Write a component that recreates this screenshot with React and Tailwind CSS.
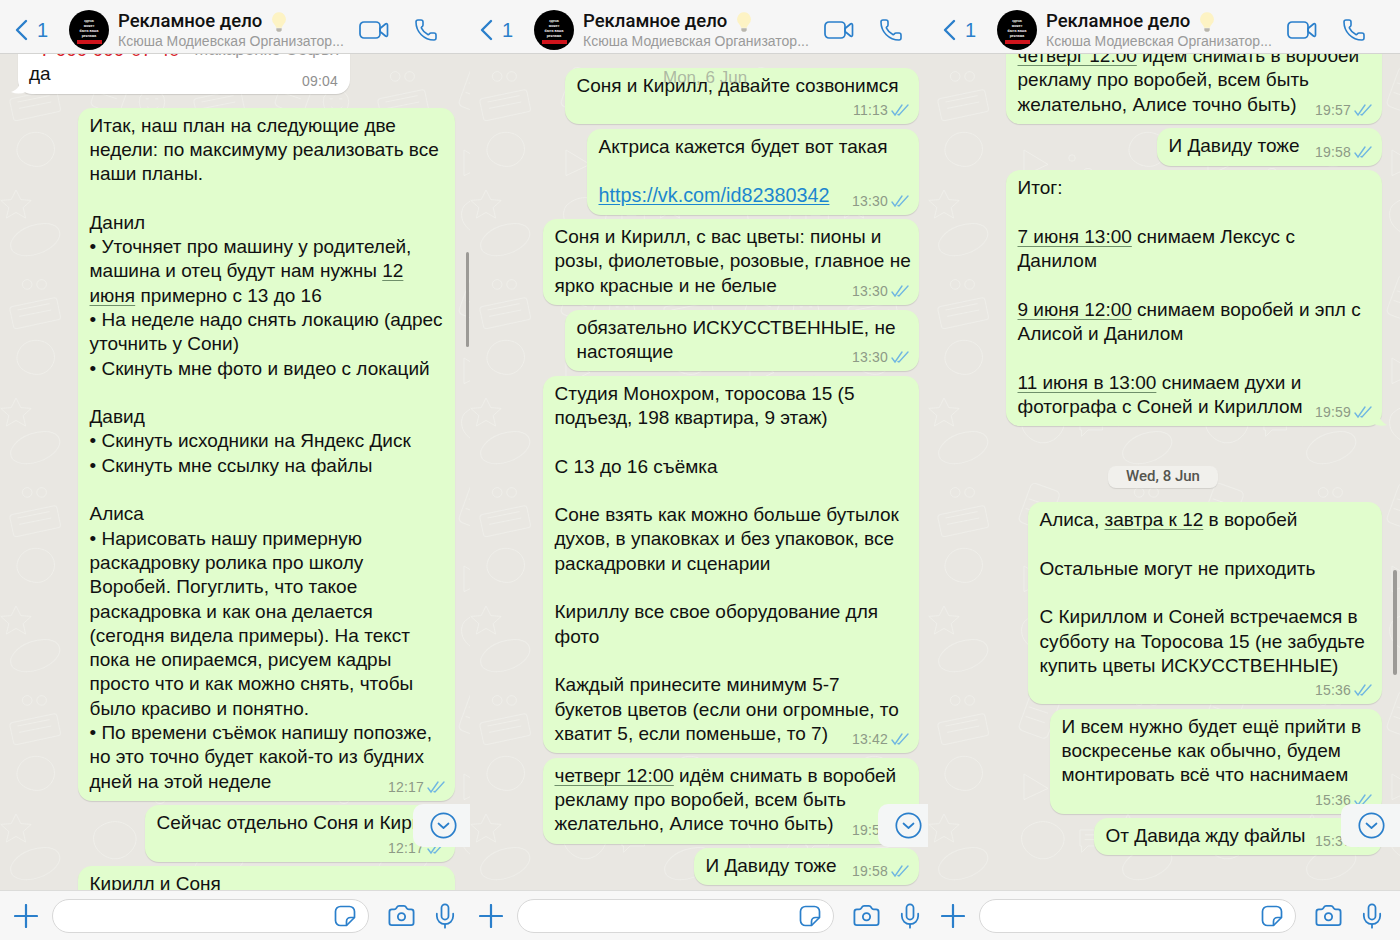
import React from 'react';
import { Phone, Camera, Mic } from 'lucide-react';

const U = ({ children }) => (
  <span className="underline decoration-[#6f8f6a] decoration-1 underline-offset-[3px]">{children}</span>
);

const Ticks = () => (
  <svg width="18" height="14" viewBox="0 0 18 14" fill="none" stroke="#6fb6e2" strokeWidth="1.400" strokeLinecap="round">
    <path d="M1 8l3 4L11 2" />
    <path d="M7 11.500l1 .5L17 2" />
  </svg>
);

const Video = () => (
  <svg width="30" height="20" viewBox="0 0 30 20" fill="none" stroke="#2a7fcb" strokeWidth="1.700" strokeLinejoin="round">
    <rect x="1" y="2" width="20" height="16" rx="4" />
    <path d="M21 8.500l5.500-4.500c.8-.6 2-.2 2 1v10c0 1.200-1.200 1.600-2 1L21 11.500z" />
  </svg>
);

const Bulb = () => (
  <svg width="16" height="22" viewBox="0 0 18 24">
    <path d="M9 1a8 8 0 0 0-5 14c1 1 1.600 2 1.800 3.500h6.400c.2-1.500.8-2.500 1.800-3.500A8 8 0 0 0 9 1z" fill="#fdf3c4" />
    <path d="M6 19h6v2.500l-1.500 1.500h-3L6 21.500z" fill="#b9b6ad" />
  </svg>
);

const Back = () => (
  <svg width="14" height="22" viewBox="0 0 14 22" fill="none" stroke="#2a7fcb" strokeWidth="2.400" strokeLinecap="round" strokeLinejoin="round">
    <path d="M12 2L3 11l9 9" />
  </svg>
);

const PlusIcon = () => (
  <svg width="24" height="24" viewBox="0 0 24 24" fill="none" stroke="#2a7fcb" strokeWidth="2.200" strokeLinecap="round" className="shrink-0">
    <path d="M12 1v22M1 12h22" />
  </svg>
);

const StickerIcon = () => (
  <svg width="22" height="22" viewBox="0 0 22 22" fill="none" stroke="#2a7fcb" strokeWidth="1.700" strokeLinejoin="round">
    <path d="M6.500 1.500h9a5 5 0 0 1 5 5v6l-8 8h-6a5 5 0 0 1-5-5v-9a5 5 0 0 1 5-5z" />
    <path d="M20.500 12.500h-4a4 4 0 0 0-4 4v4" />
  </svg>
);

// маленький аватар группы
const Avatar = () => (
  <div className="w-10 h-10 rounded-full bg-black flex flex-col items-center justify-center shrink-0 overflow-hidden">
    <div className="text-white text-[3.500px] leading-[5px] font-bold text-center mt-1">
      здесь<br />может<br />быть ваша<br />реклама
    </div>
    <div className="w-[25px] h-[4px] bg-[#d0141c] mt-[1px]"></div>
  </div>
);

const Header = ({ pad }) => (
  <div className={`h-[54px] shrink-0 bg-[#f6f6f6] border-b border-[#d4d4d2] flex items-center pt-[6px] ${pad}`}>
    <div className="w-[55px] flex items-center text-[#2a7fcb] shrink-0">
      <Back />
      <span className="text-[20px] ml-[9px]">1</span>
    </div>
    <Avatar />
    <div className="ml-[9px] w-[241px] shrink-0 self-start pt-[5px]">
      <div className="flex items-center h-[22px]">
        <span className="text-[18.500px] font-medium text-[#111] font-['Roboto',sans-serif] whitespace-nowrap">Рекламное дело</span>
        <span className="ml-[9px] flex"><Bulb /></span>
      </div>
      <div className="-mt-[1px] text-[14px] leading-[18px] text-[#9a9a9a] whitespace-nowrap">Ксюша Модиевская Организатор...</div>
    </div>
    <Video />
    <Phone size={24} strokeWidth={1.600} className="ml-[25px] text-[#2a7fcb]" />
  </div>
);

const Footer = ({ pad }) => (
  <div className={`h-[50px] shrink-0 bg-[#f7f7f7] border-t border-[#dcdcda] flex items-center text-[#2a7fcb] ${pad}`}>
    <PlusIcon />
    <div className="ml-[14px] w-[317px] h-[34px] bg-white rounded-full border border-[#d8d8d8] flex items-center justify-end pr-[12px] shrink-0">
      <StickerIcon />
    </div>
    <Camera size={29} strokeWidth={1.500} className="ml-[18px] shrink-0" />
    <Mic size={28} strokeWidth={1.500} className="ml-[15px] shrink-0" />
  </div>
);

const Bubble = ({ w, lines, time, timeRow, tail }) => (
  <div className={`relative shrink-0 self-end bg-[#e1fdcd] rounded-[14px] shadow-[0_1px_1px_rgba(0,0,0,0.12)] pl-[11.500px] pt-[6px] ${w} ${timeRow ? 'pb-[26px]' : 'pb-[7px]'}`}>
    {lines.map((line, i) => (
      <div key={i} className="h-[24.300px] leading-[24.300px] whitespace-nowrap">{line}</div>
    ))}
    {time && (
      <div className="absolute right-[10px] bottom-[6px] flex items-center gap-[3px] text-[14px] leading-[16px] tracking-[0.2px] text-[#8d9a86]">
        {time}
        <Ticks />
      </div>
    )}
    {tail && (
      <svg className="absolute -right-[6px] bottom-0" width="14" height="16" viewBox="0 0 14 16">
        <path d="M0 0h4c0 6 3 12 9 15-4 1-9 1-13-1z" fill="#e1fdcd" />
      </svg>
    )}
  </div>
);

const Wallpaper = ({ id }) => (
  <svg className="absolute inset-0 w-full h-full" xmlns="http://www.w3.org/2000/svg">
    <defs>
      <pattern id={id} width="230" height="260" patternUnits="userSpaceOnUse" patternTransform="scale(0.8)">
        <g fill="none" stroke="#f2f1ed" strokeOpacity="0.7" strokeWidth="1.200">
          <rect x="14" y="50" width="60" height="28" rx="4" transform="rotate(-12 44 64)" />
          <path d="M22 60l40-8M24 68l40-8" />
          <path d="M24 110c10-18 36-14 42 0 8 16-8 34-24 30-16-2-26-16-18-30z" />
          <path d="M20 170l6 12 13 1-10 9 3 13-12-7-12 7 3-13-10-9 13-1z" />
          <ellipse cx="44" cy="232" rx="32" ry="18" transform="rotate(-20 44 232)" />
          <circle cx="34" cy="28" r="6" />
          <circle cx="52" cy="28" r="6" />
          <rect x="120" y="20" width="38" height="52" rx="6" transform="rotate(20 139 46)" />
          <path d="M126 36l24 8M122 48l24 8" />
          <circle cx="190" cy="60" r="16" />
          <path d="M182 56h4M194 56h4M184 66c4 4 10 4 14 0" />
          <path d="M120 120l30 18-30 14z" />
          <circle cx="180" cy="130" r="4" />
          <circle cx="200" cy="150" r="7" />
          <path d="M120 190c14-14 34-14 46 0s-4 36-22 36-34-20-24-36z" />
          <path d="M190 190h28v20h-18l-8 8v-8h-2z" />
          <path d="M196 196h16M196 202h12" />
        </g>
      </pattern>
    </defs>
    <rect width="100%" height="100%" fill={`url(#${id})`} />
  </svg>
);

const ScrollDown = ({ w }) => (
  <div className={`absolute right-0 top-[750px] h-[43px] bg-[#f4f6f6] rounded-l-[10px] flex items-center pl-[17px] ${w}`}>
    <svg width="27" height="27" viewBox="0 0 27 27" fill="none" stroke="#2a7fcb" strokeWidth="1.700" strokeLinecap="round" strokeLinejoin="round">
      <circle cx="13.500" cy="13.500" r="12.200" />
      <path d="M8.500 11.500l5 4.500 5-4.500" />
    </svg>
  </div>
);

const Pane = ({ id, width, headPad, footPad, scrollW, chatPad, scrollbar, children }) => (
  <div className={`relative h-[940px] flex flex-col shrink-0 overflow-hidden ${width}`}>
    <Header pad={headPad} />
    <div className="relative flex-1 overflow-hidden bg-[#e9e7e2]">
      <Wallpaper id={id} />
      <div className={`relative flex flex-col gap-[4.500px] ${chatPad}`}>{children}</div>
      {scrollbar}
      <ScrollDown w={scrollW} />
    </div>
    <Footer pad={footPad} />
  </div>
);

export default function App() {
  return (
    <div className="w-[1400px] h-[940px] flex overflow-hidden text-[19px] text-[#111] font-['Liberation_Sans',Arial,sans-serif]">
      {/* левый экран */}
      <Pane
        id="wp1"
        width="w-[470px]"
        headPad="pl-[14px]"
        footPad="pl-[14px]"
        scrollW="w-[57px]"
        chatPad="pr-[15px] -mt-[22px]"
        scrollbar={<div className="absolute left-[466px] top-[198px] w-[3px] h-[95px] rounded-full bg-[#9c9a96]"></div>}
      >
        <div className="relative shrink-0 ml-[18px] w-[332px] bg-white rounded-[14px] shadow-[0_1px_1px_rgba(0,0,0,0.12)] pl-[11px] pt-[6px] pb-[7px] mb-[9.500px]">
          <div className="h-[24.300px] leading-[24.300px] whitespace-nowrap flex justify-between items-center pr-[12px]">
            <span className="text-[#d8232a]">+7 999 999-07-40</span>
            <span className="text-[17px] text-[#9a9a9a]">~ Макаренко Софья</span>
          </div>
          <div className="h-[24.300px] leading-[24.300px]">да</div>
          <div className="absolute right-[12px] bottom-[5px] text-[14px] leading-[16px] tracking-[0.2px] text-[#8f8f8f]">09:04</div>
          <svg className="absolute -left-[8px] bottom-0" width="16" height="16" viewBox="0 0 16 16">
            <path d="M16 0h-5c0 6-3 12-10 14 5 2 10 2 15 0z" fill="#ffffff" />
          </svg>
        </div>
        <Bubble
          w="w-[377px]"
          time="12:17"
          lines={[
            'Итак, наш план на следующие две',
            'недели: по максимуму реализовать все',
            'наши планы.',
            '',
            'Данил',
            '• Уточняет про машину у родителей,',
            <>машина и отец будут нам нужны <U>12</U></>,
            <><U>июня</U> примерно с 13 до 16</>,
            '• На неделе надо снять локацию (адрес',
            'уточнить у Сони)',
            '• Скинуть мне фото и видео с локаций',
            '',
            'Давид',
            '• Скинуть исходники на Яндекс Диск',
            '• Скинуть мне ссылку на файлы',
            '',
            'Алиса',
            '• Нарисовать нашу примерную',
            'раскадровку ролика про школу',
            'Воробей. Погуглить, что такое',
            'раскадровка и как она делается',
            '(сегодня видела примеры). На текст',
            'пока не опираемся, рисуем кадры',
            'просто что и как можно снять, чтобы',
            'было красиво и понятно.',
            '• По времени съёмок напишу попозже,',
            'но это точно будет какой-то из будних',
            'дней на этой неделе',
          ]}
        />
        <Bubble w="w-[310px]" time="12:17" timeRow lines={['Сейчас отдельно Соня и Кирилл']} />
        <Bubble w="w-[377px]" lines={['Кирилл и Соня']} />
      </Pane>

      {/* средний экран */}
      <Pane
        id="wp2"
        width="w-[458px]"
        headPad="pl-[9px]"
        footPad="pl-[9px]"
        scrollW="w-[50px]"
        chatPad="pr-[9px] pt-[14px]"
      >
        <Bubble w="w-[354px]" time="11:13" timeRow lines={['Соня и Кирилл, давайте созвонимся']} />
        <Bubble
          w="w-[332px]"
          time="13:30"
          lines={[
            'Актриса кажется будет вот такая',
            '',
            <span className="text-[19.800px] text-[#1c86cf] underline underline-offset-2">https://vk.com/id82380342</span>,
          ]}
        />
        <Bubble
          w="w-[376px]"
          time="13:30"
          lines={[
            'Соня и Кирилл, с вас цветы: пионы и',
            'розы, фиолетовые, розовые, главное не',
            'ярко красные и не белые',
          ]}
        />
        <Bubble w="w-[354px]" time="13:30" lines={['обязательно ИСКУССТВЕННЫЕ, не', 'настоящие']} />
        <Bubble
          w="w-[376px]"
          time="13:42"
          lines={[
            'Студия Монохром, торосова 15 (5',
            'подъезд, 198 квартира, 9 этаж)',
            '',
            'С 13 до 16 съёмка',
            '',
            'Соне взять как можно больше бутылок',
            'духов, в упаковках и без упаковок, все',
            'раскадровки и сценарии',
            '',
            'Кириллу все свое оборудование для',
            'фото',
            '',
            'Каждый принесите минимум 5-7',
            'букетов цветов (если они огромные, то',
            'хватит 5, если поменьше, то 7)',
          ]}
        />
        <Bubble
          w="w-[376px]"
          time="19:57"
          lines={[
            <><U>четверг 12:00</U> идём снимать в воробей</>,
            'рекламу про воробей, всем быть',
            'желательно, Алисе точно быть)',
          ]}
        />
        <Bubble w="w-[225px]" time="19:58" lines={['И Давиду тоже']} />
        <div className="absolute left-[193px] top-[15px] text-[17px] leading-[18px] text-[#8a8a86]/60">Mon, 6 Jun</div>
      </Pane>

      {/* правый экран */}
      <Pane
        id="wp3"
        width="w-[472px]"
        headPad="pl-[14px]"
        footPad="pl-[13px]"
        scrollW="w-[59px]"
        chatPad="pr-[18px] -mt-[16px]"
        scrollbar={<div className="absolute left-[465px] top-[516px] w-[4px] h-[105px] rounded-full bg-[#9c9a96]"></div>}
      >
        <Bubble
          w="w-[376px]"
          time="19:57"
          lines={[
            <><U>четверг 12:00</U> идем снимать в воробей</>,
            'рекламу про воробей, всем быть',
            'желательно, Алисе точно быть)',
          ]}
        />
        <Bubble w="w-[225px]" time="19:58" lines={['И Давиду тоже']} />
        <Bubble
          w="w-[376px]"
          time="19:59"
          tail
          lines={[
            'Итог:',
            '',
            <><U>7 июня 13:00</U> снимаем Лексус с</>,
            'Данилом',
            '',
            <><U>9 июня 12:00</U> снимаем воробей и эпл с</>,
            'Алисой и Данилом',
            '',
            <><U>11 июня в 13:00</U> снимаем духи и</>,
            'фотографа с Соней и Кириллом',
          ]}
        />
        <div className="shrink-0 self-start ml-[180px] mt-[35px] mb-[10px] w-[110px] h-[22px] rounded-[8px] bg-[#f1f0ec] shadow-[0_1px_1px_rgba(0,0,0,0.1)] flex items-center justify-center text-[15px] font-medium font-['Roboto',sans-serif] text-[#55554f] whitespace-nowrap">
          Wed, 8 Jun
        </div>
        <Bubble
          w="w-[354px]"
          time="15:36"
          timeRow
          lines={[
            <>Алиса, <U>завтра к 12</U> в воробей</>,
            '',
            'Остальные могут не приходить',
            '',
            'С Кириллом и Соней встречаемся в',
            'субботу на Торосова 15 (не забудьте',
            'купить цветы ИСКУССТВЕННЫЕ)',
          ]}
        />
        <Bubble
          w="w-[332px]"
          time="15:36"
          timeRow
          lines={[
            'И всем нужно будет ещё прийти в',
            'воскресенье как обычно, будем',
            'монтировать всё что наснимаем',
          ]}
        />
        <Bubble w="w-[288px]" time="15:37" lines={['От Давида жду файлы']} />
      </Pane>
    </div>
  );
}
